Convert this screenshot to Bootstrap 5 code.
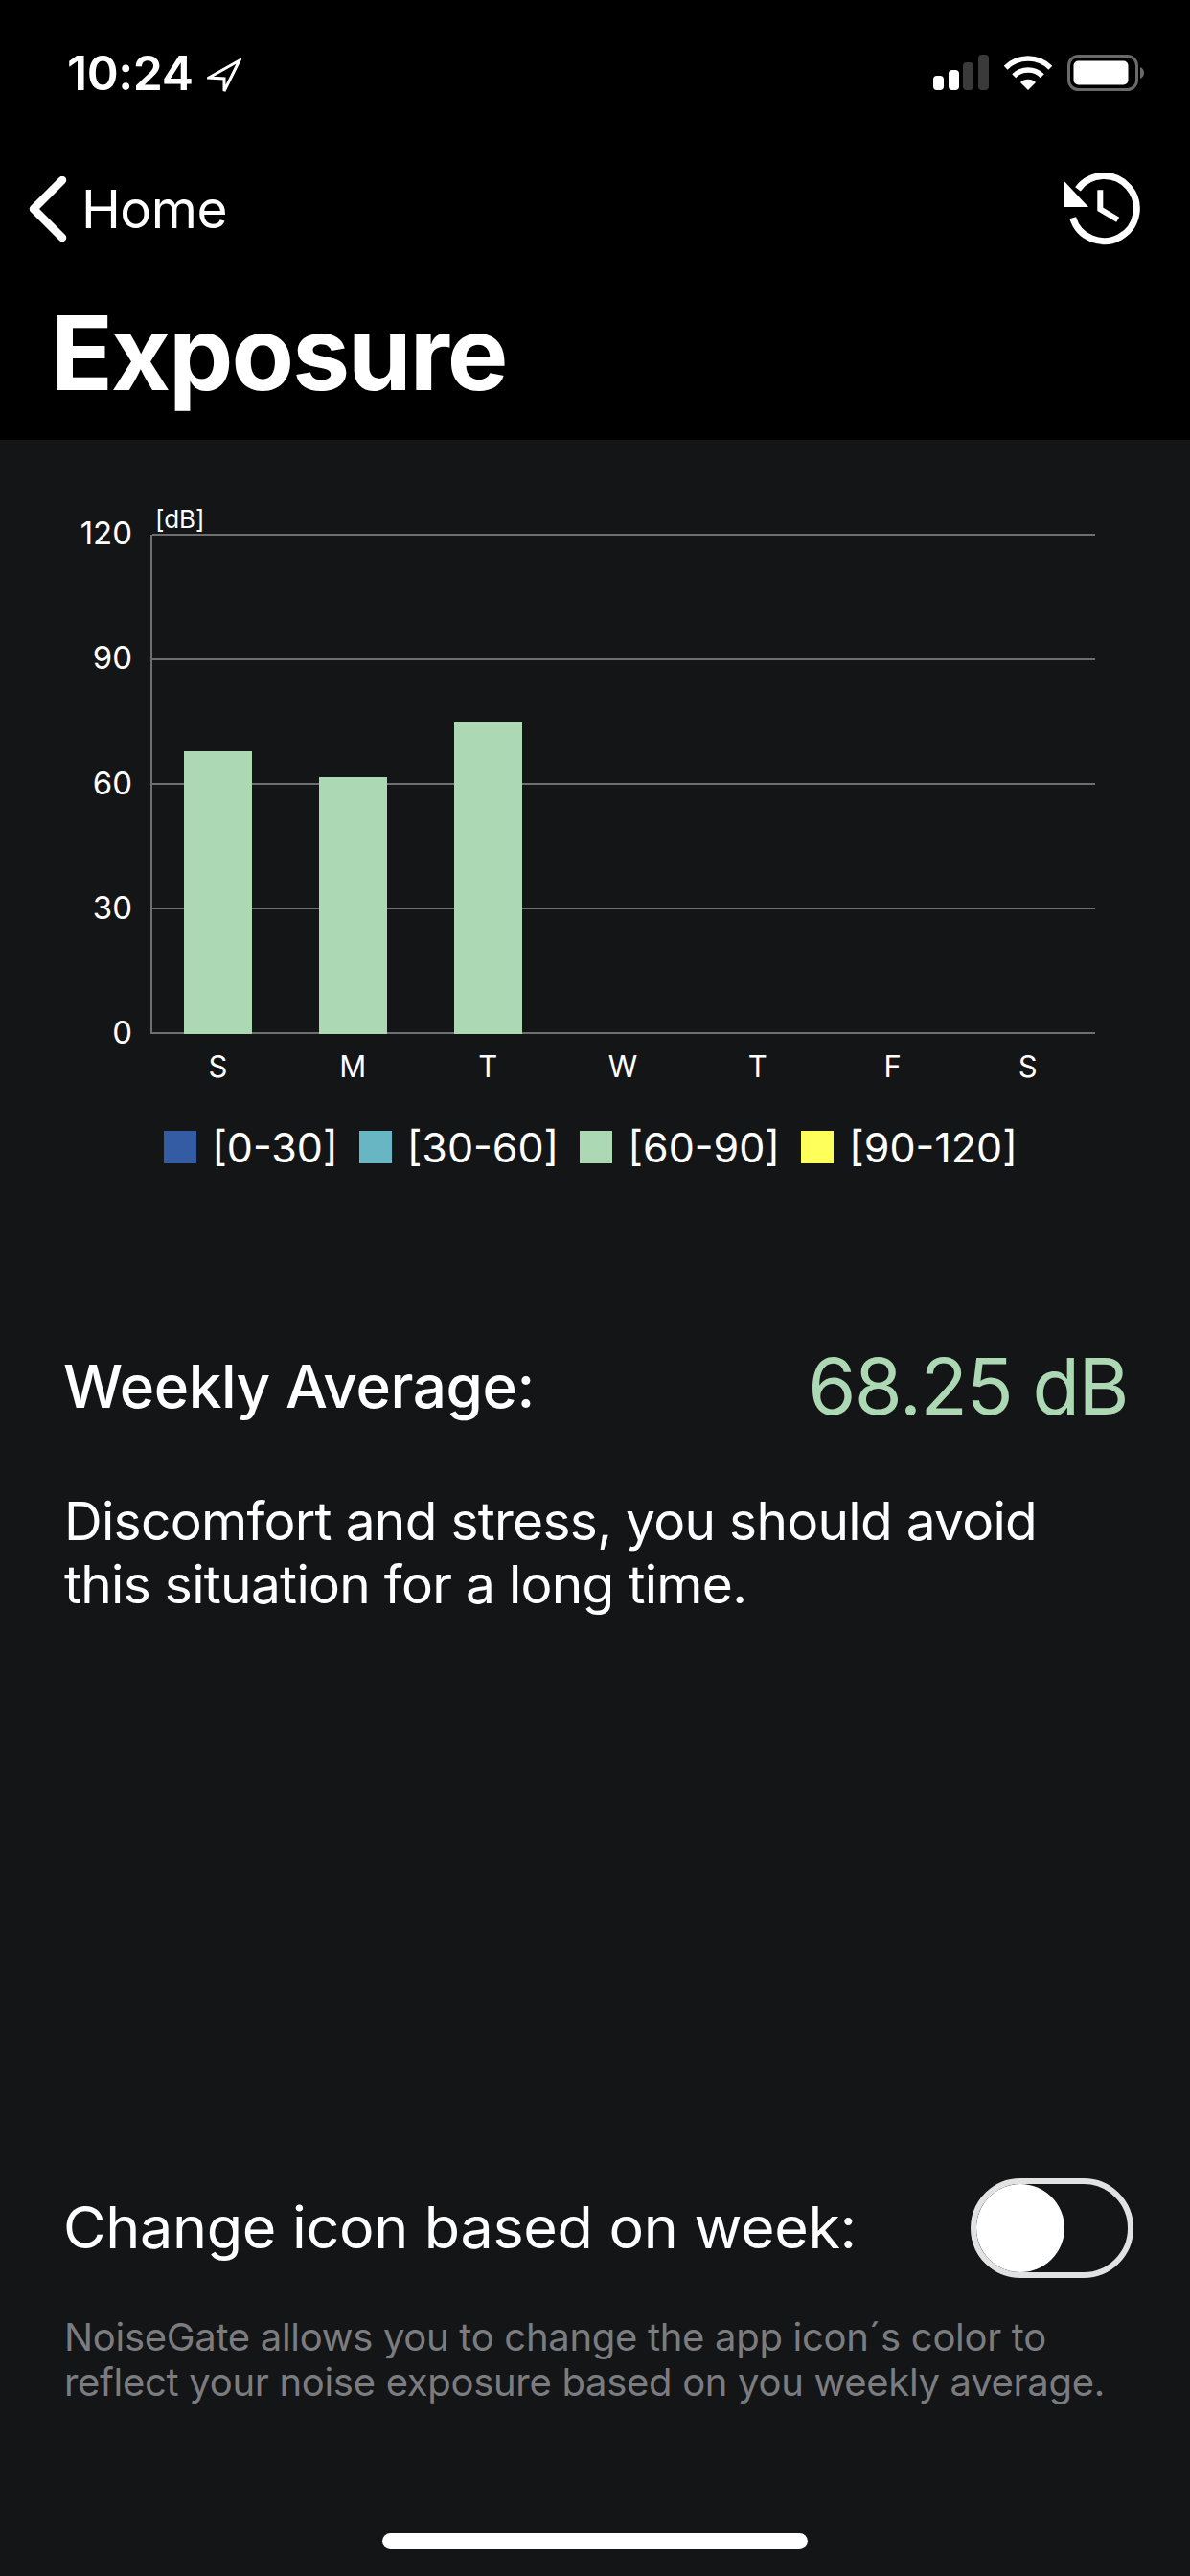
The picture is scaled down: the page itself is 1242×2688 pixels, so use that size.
<!DOCTYPE html>
<html lang="en">
<head>
    <meta charset="UTF-8">
    <title>Exposure</title>
    <meta name="viewport" content="width=device-width, initial-scale=1.0">
    <link href="https://cdn.jsdelivr.net/npm/bootstrap@5.3.0/dist/css/bootstrap.min.css" rel="stylesheet">
    <style>
        body {
            background-color: #141517;
            color: #fff;
            font-family: Inter, "Liberation Sans", sans-serif;
        }

        /* header */
        .status-row { padding: 50px 48px 0 70px; height: 102px; }
        .status-time { font-size: 50px; font-weight: 600; line-height: 52px; letter-spacing: -.4px; }
        .status-arrow { margin: 11px 0 0 14px; }
        .status-icons { padding-top: 7px; }
        .nav-row { height: 80px; margin-top: 76px; padding: 0 52px 0 30px; }
        .back-label { font-size: 55px; line-height: 80px; letter-spacing: -.5px; margin-left: 15px; }
        .screen-title { font-size: 107px; font-weight: 700; line-height: 110px; margin: 55px 0 0; padding: 0 0 36px 53px; letter-spacing: -2px; }

        /* chart */
        .chart-row { padding-top: 99px; }
        .y-labels { width: 138px; height: 521px; margin: -2px 19px 0 0; font-size: 33px; }
        .y-labels span { display: block; height: 0; line-height: 0; text-align: right; }
        .plot-area { width: 986px; height: 521px; border-left: 2px solid #6e6f70; }
        .grid-lines { inset: 0; }
        .grid-lines div { height: 2px; background-color: #6e6f70; margin-top: -1px; }
        .bars { display: grid; grid-template-columns: repeat(7, 1fr); height: 100%; margin-left: -2px; align-items: end; justify-items: center; }
        .day-bar { width: 71px; background-color: #acd8b4; }
        .unit-label { left: 3px; top: -29px; font-size: 26px; line-height: 26px; }
        .x-labels { display: grid; grid-template-columns: repeat(7, 1fr); width: 986px; margin: 19px 0 0 157px; font-size: 31px; line-height: 30px; text-align: center; }
        .legend-row { margin-top: 44px; padding-right: 9px; gap: 22px; font-size: 43px; line-height: 50px; }
        .legend-swatch { width: 34px; height: 34px; margin-right: 16px; }

        /* stats */
        .stats-row { margin-top: 180px; padding: 0 65px 0 66px; line-height: 90px; }
        .stats-label { font-size: 62px; font-weight: 500; letter-spacing: -.4px; }
        .stats-value { font-size: 81px; font-weight: 400; letter-spacing: -1.5px; color: #acd8b4; }
        .stats-text { margin: 62px 0 0; padding: 0 67px; font-size: 55px; line-height: 66px; letter-spacing: -.7px; }

        /* toggle */
        .toggle-row { padding: 0 59px 0 66px; height: 104px; }
        .toggle-label { font-size: 61px; letter-spacing: -.3px; }
        .form-switch.icon-switch { padding: 0; margin: 0; min-height: 0; line-height: 0; }
        .form-switch.icon-switch .form-check-input,
        .form-switch.icon-switch .form-check-input:focus {
            width: 170px;
            height: 104px;
            margin: 0;
            background-color: transparent;
            border: 6px solid #e2e2e2;
            border-radius: 52px;
            box-shadow: none;
            background-position: left center;
            background-size: contain;
            background-image: url("data:image/svg+xml,%3csvg xmlns='http://www.w3.org/2000/svg' viewBox='-4 -4 8 8'%3e%3ccircle r='4' fill='%23fff'/%3e%3c/svg%3e");
        }
        .helper-text { margin: 38px 0 0; padding: 0 67px; font-size: 40px; line-height: 47px; letter-spacing: -.3px; color: #7b7c7f; }
        .home-bar { width: 444px; height: 17px; margin: 134px auto 28px; border-radius: 9px; background-color: #fff; }
    </style>
</head>
<body>
    <div class="d-flex flex-column min-vh-100">
        <header class="bg-black">
            <div class="status-row d-flex justify-content-between">
                <div class="d-flex align-items-start">
                    <span class="status-time">10:24</span>
                    <svg class="status-arrow" width="36" height="36" viewBox="0 0 36 36"><path d="M34 2 2 20l16 1 0 13z" fill="none" stroke="#fff" stroke-width="3" stroke-linejoin="miter"/></svg>
                </div>
                <div class="status-icons d-flex align-items-start gap-3">
                    <svg width="58" height="37" viewBox="0 0 58 37">
                        <rect x="0" y="22" width="11" height="15" rx="4" fill="#fff"/>
                        <rect x="16" y="16" width="11" height="21" rx="4" fill="#fff"/>
                        <rect x="31" y="8" width="11" height="29" rx="4" fill="#3a3a3a"/>
                        <rect x="47" y="0" width="11" height="37" rx="4" fill="#3a3a3a"/>
                    </svg>
                    <svg width="50" height="37" viewBox="0 0 50 37">
                        <path d="M1.7 13.7a33 33 0 0 1 46.6 0M10.2 22.2a21 21 0 0 1 29.6 0" fill="none" stroke="#fff" stroke-width="5.5"/>
                        <path d="M25 37 17 29a11.300 11.300 0 0 1 16 0z" fill="#fff"/>
                    </svg>
                    <svg width="80" height="38" viewBox="0 0 80 38">
                        <rect x="1.500" y="1.500" width="71" height="35" rx="10" fill="none" stroke="#6a6a6a" stroke-width="3"/>
                        <rect x="6.500" y="6.500" width="57" height="25" rx="5" fill="#fff"/>
                        <path d="M76 13c2.500 1 4 3 4 6s-1.500 5-4 6z" fill="#6a6a6a"/>
                    </svg>
                </div>
            </div>
            <div class="nav-row d-flex justify-content-between align-items-center">
                <div class="d-flex align-items-center">
                    <svg width="40" height="68" viewBox="0 0 40 68"><path d="M35 4 5 34l30 30" fill="none" stroke="#fff" stroke-width="8.500" stroke-linecap="round" stroke-linejoin="round"/></svg>
                    <span class="back-label">Home</span>
                </div>
                <svg width="80" height="80" viewBox="0 0 80 80">
                    <path d="M9.700 49.300A34 34 0 1 0 15 19.300" fill="none" stroke="#fff" stroke-width="7"/>
                    <path d="M0 10.300V38H26z" fill="#fff"/>
                    <path d="M38.300 20.300V40.300L56.700 51.300" fill="none" stroke="#fff" stroke-width="6"/>
                </svg>
            </div>
            <h1 class="screen-title">Exposure</h1>
        </header>

        <main class="d-flex flex-column flex-grow-1">
            <div class="chart-row d-flex">
                <div class="y-labels d-flex flex-column justify-content-between">
                    <span>120</span><span>90</span><span>60</span><span>30</span><span>0</span>
                </div>
                <div class="plot-area position-relative">
                    <span class="unit-label position-absolute">[dB]</span>
                    <div class="grid-lines position-absolute d-flex flex-column justify-content-between">
                        <div></div><div></div><div></div><div></div><div></div>
                    </div>
                    <div class="bars position-relative">
                        <div class="day-bar" style="height:56.67%"></div>
                        <div class="day-bar" style="height:51.46%"></div>
                        <div class="day-bar" style="height:62.5%"></div>
                    </div>
                </div>
            </div>
            <div class="x-labels">
                <span>S</span><span>M</span><span>T</span><span>W</span><span>T</span><span>F</span><span>S</span>
            </div>
            <div class="legend-row d-flex justify-content-center">
                <div class="d-flex align-items-center"><span class="legend-swatch" style="background:#335ca5"></span>[0-30]</div>
                <div class="d-flex align-items-center"><span class="legend-swatch" style="background:#68b5c4"></span>[30-60]</div>
                <div class="d-flex align-items-center"><span class="legend-swatch" style="background:#acd8b4"></span>[60-90]</div>
                <div class="d-flex align-items-center"><span class="legend-swatch" style="background:#ffff5c"></span>[90-120]</div>
            </div>

            <div class="stats-row d-flex justify-content-between align-items-center">
                <span class="stats-label">Weekly Average:</span>
                <span class="stats-value">68.25 dB</span>
            </div>
            <p class="stats-text">Discomfort and stress, you should avoid<br>this situation for a long time.</p>

            <div class="mt-auto">
                <div class="toggle-row d-flex justify-content-between align-items-center">
                    <span class="toggle-label">Change icon based on week:</span>
                    <div class="form-check form-switch icon-switch">
                        <input class="form-check-input" type="checkbox" role="switch" aria-label="Change icon based on week">
                    </div>
                </div>
                <p class="helper-text">NoiseGate allows you to change the app icon´s color to<br>reflect your noise exposure based on you weekly average.</p>
                <div class="home-bar"></div>
            </div>
        </main>
    </div>

    <script src="https://cdn.jsdelivr.net/npm/bootstrap@5.3.0/dist/js/bootstrap.bundle.min.js"></script>
</body>
</html>
